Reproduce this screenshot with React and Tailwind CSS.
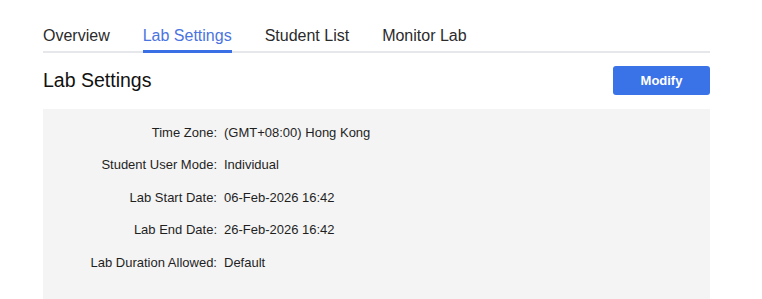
const tabs = ["Overview", "Lab Settings", "Student List", "Monitor Lab"];

const settings = [
  ["Time Zone:", "(GMT+08:00) Hong Kong"],
  ["Student User Mode:", "Individual"],
  ["Lab Start Date:", "06-Feb-2026 16:42"],
  ["Lab End Date:", "26-Feb-2026 16:42"],
  ["Lab Duration Allowed:", "Default"],
];

export default function App() {
  const active = "Lab Settings";

  return (
    <div className="min-h-screen bg-white font-['Liberation_Sans',Arial,sans-serif]">
      <div className="ml-[43px] w-[667px]">
        {/* Tabs */}
        <div className="flex gap-[33px] border-b-2 border-gray-200 pt-[24px]">
          {tabs.map((t) => (
            <div
              key={t}
              className={`-mb-[2px] border-b-[3px] pb-[2px] text-[16px] leading-[24px] ${
                t === active
                  ? "border-[#3b6fe6] text-[#4a74e0]"
                  : "border-transparent text-[#2b2b2b]"
              }`}
            >
              {t}
            </div>
          ))}
        </div>

        {/* Header */}
        <div className="mt-[13px] flex items-center justify-between">
          <h1 className="text-[19.5px] leading-[29px] text-[#111]">Lab Settings</h1>
          <button className="h-[29px] w-[97px] rounded-[3px] bg-[#3a72e8] text-[13px] font-bold text-white">
            Modify
          </button>
        </div>

        {/* Settings panel */}
        <div className="mt-[14px] bg-[#f4f4f4] pb-[24px] pt-[7px]">
          {settings.map(([label, value]) => (
            <div key={label} className="flex h-[32.5px] items-center text-[13px] text-[#1f1f1f]">
              <div className="w-[174px] text-right">{label}</div>
              <div className="pl-[7px]">{value}</div>
            </div>
          ))}
        </div>
      </div>
    </div>
  );
}
